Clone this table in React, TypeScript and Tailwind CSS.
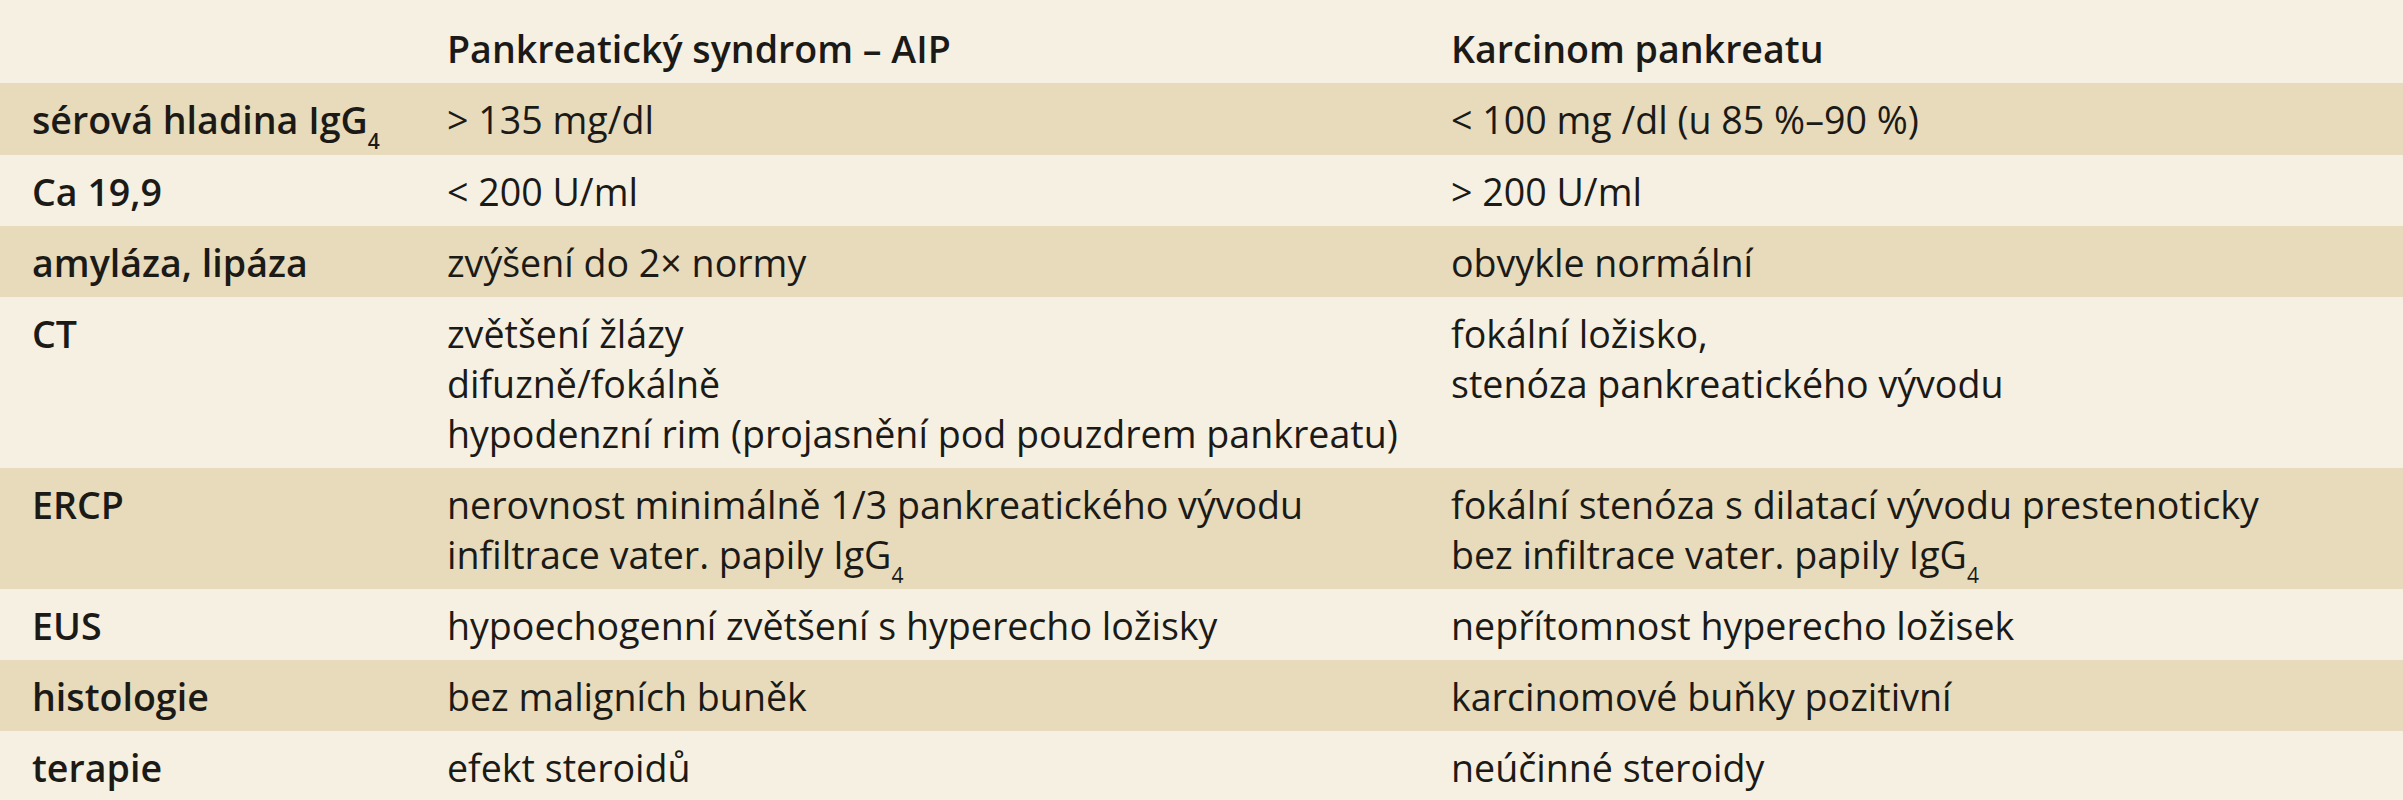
import type { ReactNode } from 'react'

const IgG4 = () => (
  <>
    IgG<sub className="relative top-[6px] text-[21px] leading-none align-sub">4</sub>
  </>
)

type Row = { label: ReactNode; aip: ReactNode[]; ca: ReactNode[] }

const ROWS: Row[] = [
  {
    label: <>sérová hladina <IgG4 /></>,
    aip: ['> 135 mg/dl'],
    ca: ['< 100 mg /dl (u 85 %–90 %)'],
  },
  { label: 'Ca 19,9', aip: ['< 200 U/ml'], ca: ['> 200 U/ml'] },
  { label: 'amyláza, lipáza', aip: ['zvýšení do 2× normy'], ca: ['obvykle normální'] },
  {
    label: 'CT',
    aip: [
      'zvětšení žlázy',
      'difuzně/fokálně',
      'hypodenzní rim (projasnění pod pouzdrem pankreatu)',
    ],
    ca: ['fokální ložisko,', 'stenóza pankreatického vývodu'],
  },
  {
    label: 'ERCP',
    aip: [
      'nerovnost minimálně 1/3 pankreatického vývodu',
      <>infiltrace vater. papily <IgG4 /></>,
    ],
    ca: [
      'fokální stenóza s dilatací vývodu prestenoticky',
      <>bez infiltrace vater. papily <IgG4 /></>,
    ],
  },
  {
    label: 'EUS',
    aip: ['hypoechogenní zvětšení s hyperecho ložisky'],
    ca: ['nepřítomnost hyperecho ložisek'],
  },
  { label: 'histologie', aip: ['bez maligních buněk'], ca: ['karcinomové buňky pozitivní'] },
  { label: 'terapie', aip: ['efekt steroidů'], ca: ['neúčinné steroidy'] },
]

const Lines = ({ items }: { items: ReactNode[] }) => (
  <div className="flex flex-col">
    {items.map((t, i) => (
      <div key={i} className="whitespace-nowrap">{t}</div>
    ))}
  </div>
)

export default function App() {
  return (
    <div
      className="w-[2403px] h-[800px] overflow-hidden bg-[#f6f0e2] text-[#1b1a17] text-[37.6px] leading-[50px]"
      style={{ fontFamily: '"Open Sans", "Liberation Sans", sans-serif' }}
    >
      {/* header */}
      <div className="grid grid-cols-[447px_1004px_1fr] pt-[24px] pb-[9px] font-semibold">
        <div className="pl-[32px]" />
        <div>Pankreatický syndrom – AIP</div>
        <div>Karcinom pankreatu</div>
      </div>

      {ROWS.map((r, i) => (
        <div
          key={i}
          className={`grid grid-cols-[447px_1004px_1fr] pt-[12px] pb-[9px] ${
            i % 2 === 0 ? 'bg-[#e7dbbb]' : 'bg-[#f6f0e2]'
          }`}
        >
          <div className="pl-[32px] font-semibold whitespace-nowrap">{r.label}</div>
          <Lines items={r.aip} />
          <Lines items={r.ca} />
        </div>
      ))}
    </div>
  )
}
